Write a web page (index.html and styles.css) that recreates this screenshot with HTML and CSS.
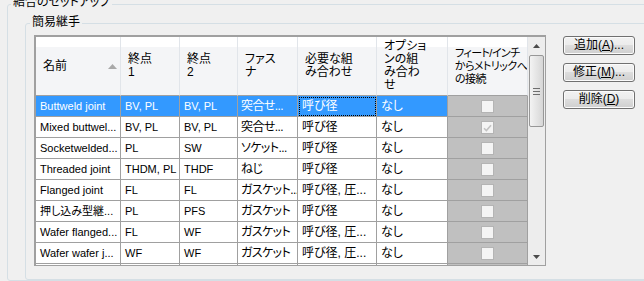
FILE: index.html
```html
<!DOCTYPE html>
<html lang="ja">
<head>
    <meta charset="UTF-8">
    <meta name="viewport" content="width=device-width, initial-scale=1.0">
    <title>結合のセットアップ</title>
    <link rel="stylesheet" href="styles.css">
</head>
<body>
    <fieldset class="setup">
        <legend>結合のセットアップ</legend>
        <fieldset class="simple">
            <legend>簡易継手</legend>
            <div class="simple-body">
                <div class="grid">
                    <div class="grid-view">
                        <table class="joints">
                            <colgroup>
                                <col style="width: 85px">
                                <col style="width: 59px">
                                <col style="width: 58px">
                                <col style="width: 60px">
                                <col style="width: 79px">
                                <col style="width: 71px">
                                <col style="width: 80px">
                            </colgroup>
                            <thead>
                                <tr>
                                    <th>名前<span class="sort"><svg width="9" height="5" viewBox="0 0 9 5"><polygon points="0,5 4.5,0 9,5" fill="#a9a9a9"/></svg></span></th>
                                    <th>終点<br>1</th>
                                    <th>終点<br>2</th>
                                    <th>ファス<br>ナ</th>
                                    <th>必要な組<br>み合わせ</th>
                                    <th>オプショ<br>ンの組<br>み合わ<br>せ</th>
                                    <th class="narrow">フィート/インチ<br>からメトリックへ<br>の接続</th>
                                </tr>
                            </thead>
                            <tbody>
                                <tr class="selected">
                                    <td>Buttweld joint</td>
                                    <td>BV, PL</td>
                                    <td>BV, PL</td>
                                    <td>突合せ...</td>
                                    <td class="focus">呼び径</td>
                                    <td>なし</td>
                                    <td class="metric"><span class="check"></span></td>
                                </tr>
                                <tr>
                                    <td>Mixed buttwel...</td>
                                    <td>BV, PL</td>
                                    <td>BV, PL</td>
                                    <td>突合せ...</td>
                                    <td>呼び径</td>
                                    <td>なし</td>
                                    <td class="metric"><span class="check"><svg width="9" height="8" viewBox="0 0 9 8"><path d="M1 4.2 L3.4 6.6 L8 1.2" stroke="#c2c2c2" stroke-width="1.6" fill="none"/></svg></span></td>
                                </tr>
                                <tr>
                                    <td>Socketwelded...</td>
                                    <td>PL</td>
                                    <td>SW</td>
                                    <td>ソケット...</td>
                                    <td>呼び径</td>
                                    <td>なし</td>
                                    <td class="metric"><span class="check"></span></td>
                                </tr>
                                <tr>
                                    <td>Threaded joint</td>
                                    <td>THDM, PL</td>
                                    <td>THDF</td>
                                    <td>ねじ</td>
                                    <td>呼び径</td>
                                    <td>なし</td>
                                    <td class="metric"><span class="check"></span></td>
                                </tr>
                                <tr>
                                    <td>Flanged joint</td>
                                    <td>FL</td>
                                    <td>FL</td>
                                    <td>ガスケット...</td>
                                    <td>呼び径, 圧...</td>
                                    <td>なし</td>
                                    <td class="metric"><span class="check"></span></td>
                                </tr>
                                <tr>
                                    <td>押し込み型継...</td>
                                    <td>PL</td>
                                    <td>PFS</td>
                                    <td>ガスケット</td>
                                    <td>呼び径</td>
                                    <td>なし</td>
                                    <td class="metric"><span class="check"></span></td>
                                </tr>
                                <tr>
                                    <td>Wafer flanged...</td>
                                    <td>FL</td>
                                    <td>WF</td>
                                    <td>ガスケット</td>
                                    <td>呼び径, 圧...</td>
                                    <td>なし</td>
                                    <td class="metric"><span class="check"></span></td>
                                </tr>
                                <tr>
                                    <td>Wafer wafer j...</td>
                                    <td>WF</td>
                                    <td>WF</td>
                                    <td>ガスケット</td>
                                    <td>呼び径, 圧...</td>
                                    <td>なし</td>
                                    <td class="metric"><span class="check"></span></td>
                                </tr>
                                <tr class="next">
                                    <td></td>
                                    <td></td>
                                    <td></td>
                                    <td></td>
                                    <td></td>
                                    <td></td>
                                    <td class="metric"></td>
                                </tr>
                            </tbody>
                        </table>
                    </div>
                    <div class="vscroll">
                        <span class="arrow"><svg width="7" height="4" viewBox="0 0 7 4"><polygon points="0,4 3.5,0 7,4" fill="#4a4a4a"/></svg></span>
                        <div class="thumb"><span class="grip"></span></div>
                        <span class="arrow down"><svg width="7" height="4" viewBox="0 0 7 4"><polygon points="0,0 7,0 3.5,4" fill="#4a4a4a"/></svg></span>
                    </div>
                </div>
                <div class="actions">
                    <button>追加(<u>A</u>)...</button>
                    <button>修正(<u>M</u>)...</button>
                    <button>削除(<u>D</u>)</button>
                </div>
            </div>
        </fieldset>
    </fieldset>
</body>
</html>
```

FILE: styles.css
```css
html, body {
    margin: 0;
    height: 100%;
    overflow: hidden;
}

body {
    background-color: #f0f0f0;
    color: #000;
    font-family: "Liberation Sans", "Noto Sans CJK JP", sans-serif;
    font-size: 12px;
    font-feature-settings: "palt";
}

/* group boxes */
.setup {
    margin: -5px -40px 0 7px;
    padding: 2px 0 0 17px;
    min-width: 0;
    border: 1px solid #d5dfe5;
    border-radius: 3px;
}

.setup > legend {
    margin-left: -14px;
    padding: 0 2px 4px;
    line-height: 14px;
}

.simple {
    margin: 0;
    padding: 4px 0 13px 8px;
    min-width: 0;
    border: 1px solid #d5dfe5;
    border-radius: 3px;
}

.simple > legend {
    margin-left: -4px;
    padding: 0 2px 2px;
    line-height: 14px;
}

.simple-body {
    display: flex;
    align-items: flex-start;
}

/* data grid */
.grid {
    display: flex;
    height: 228px;
    border-style: solid;
    border-color: #a0a0a0;
    border-width: 2px 1px 1px 2px;
    background-color: #fff;
}

.grid-view {
    width: 492px;
    overflow: hidden;
}

.joints {
    table-layout: fixed;
    width: 492px;
    border-collapse: separate;
    border-spacing: 0;
}

.joints th {
    height: 58px;
    padding: 0 0 0 7px;
    text-align: left;
    vertical-align: middle;
    font-weight: normal;
    line-height: 13px;
    white-space: nowrap;
    overflow: hidden;
    background: linear-gradient(#fff 0, #fff 10px, #f4f5f7 10px);
    border-right: 1px solid #e1e5ea;
    border-bottom: 1px solid #a0a0a0;
}

.joints th.narrow {
    font-size: 11px;
    letter-spacing: -0.6px;
}

.sort {
    float: right;
    margin: 4px 3px 0 0;
}

.sort svg {
    display: block;
}

.joints td {
    height: 20px;
    padding: 0 0 0 4px;
    line-height: 20px;
    white-space: nowrap;
    overflow: hidden;
    border-right: 1px solid #a0a0a0;
    border-bottom: 1px solid #a0a0a0;
}

.joints td:nth-child(-n+3) {
    font-size: 11px;
}

.joints td:nth-child(4) {
    padding-left: 3px;
    letter-spacing: -0.6px;
}

.joints tr.selected td {
    background-color: #3399ff;
    color: #fff;
}

.joints td.focus {
    outline: 1px dotted #000;
    outline-offset: -2px;
}

.joints td.metric,
.joints tr.selected td.metric {
    padding: 0;
    text-align: center;
    background-color: #c0c0c0;
}

.check {
    display: inline-flex;
    align-items: center;
    justify-content: center;
    box-sizing: border-box;
    width: 13px;
    height: 13px;
    vertical-align: middle;
    border: 1px solid #b4b4b4;
    background-color: #f4f4f4;
}

/* scrollbar */
.vscroll {
    width: 17px;
    display: flex;
    flex-direction: column;
    align-items: center;
    background-color: #ededed;
}

.arrow {
    display: flex;
    align-items: center;
    justify-content: center;
    height: 17px;
    width: 17px;
}

.arrow.down {
    margin-top: auto;
}

.thumb {
    box-sizing: border-box;
    width: 15px;
    height: 72px;
    margin-top: 1px;
    display: flex;
    align-items: center;
    justify-content: center;
    border: 1px solid #979797;
    border-radius: 2px;
    background: linear-gradient(to right, #f3f3f3, #e2e2e2 60%, #d6d6d6);
}

.grip {
    width: 7px;
    height: 5px;
    border-top: 1px solid #6e6e6e;
    border-bottom: 1px solid #6e6e6e;
    background: linear-gradient(transparent 2px, #6e6e6e 2px, #6e6e6e 3px, transparent 3px);
}

/* buttons */
.actions {
    display: flex;
    flex-direction: column;
    gap: 8px;
    margin: 1px 0 0 17px;
}

.actions button {
    width: 72px;
    height: 19px;
    padding: 0;
    font: inherit;
    line-height: 15px;
    color: #000;
    border: 1px solid #707070;
    border-radius: 3px;
    background: linear-gradient(#f2f2f2 0, #ebebeb 50%, #dddddd 50%, #cfcfcf 100%);
    box-shadow: inset 0 0 0 1px #fbfbfb;
}
```
